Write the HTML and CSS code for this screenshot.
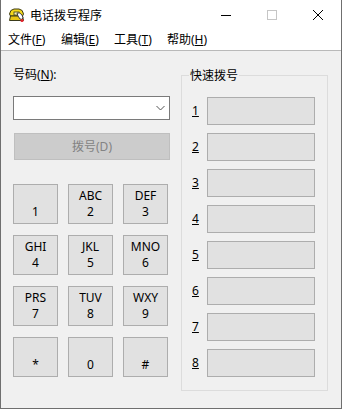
FILE: index.html
```html
<!DOCTYPE html>
<html lang="zh">
<head>
<meta charset="utf-8">
<title>电话拨号程序</title>
<link rel="stylesheet" href="styles.css">
</head>
<body>
<div class="window">
  <div class="titlebar">
    <svg class="app-icon" width="18" height="18" viewBox="0 0 18 18">
      <path d="M1.5 8 Q2 3.5 6 3 L11 3 Q15 3.5 15.5 8 L14.5 10 L2.5 10 Z" fill="#f5d81a" stroke="#3a3a1a" stroke-width="1"/>
      <path d="M2.5 10 L14.5 10 L15.5 14.5 L1.5 14.5 Z" fill="#e8c414" stroke="#3a3a1a" stroke-width="1"/>
      <rect x="6" y="6" width="5" height="3" fill="#fff6b0" stroke="#3a3a1a" stroke-width="0.8"/>
      <path d="M9 7 Q12 6 14 9 L15 12 Q14 14 12 13 L10 10 Z" fill="#ffffff" stroke="#333" stroke-width="0.9"/>
      <circle cx="14" cy="14.5" r="1.6" fill="#e0202a"/>
    </svg>
    <span class="title">电话拨号程序</span>
    <div class="caption-buttons">
      <div class="cbtn"><svg width="10" height="10" viewBox="0 0 10 10"><path d="M0 5.5 H10" stroke="#000" stroke-width="1"/></svg></div>
      <div class="cbtn"><svg width="10" height="10" viewBox="0 0 10 10"><rect x="0.5" y="0.5" width="9" height="9" fill="none" stroke="#c6c6c6" stroke-width="1"/></svg></div>
      <div class="cbtn"><svg width="10" height="10" viewBox="0 0 10 10"><path d="M0 0 L10 10 M10 0 L0 10" stroke="#000" stroke-width="1"/></svg></div>
    </div>
  </div>
  <div class="menubar">
    <span class="menu">文件(<u>F</u>)</span>
    <span class="menu">编辑(<u>E</u>)</span>
    <span class="menu">工具(<u>T</u>)</span>
    <span class="menu">帮助(<u>H</u>)</span>
  </div>
  <div class="client">
    <div class="left">
      <div class="label">号码(<u>N</u>):</div>
      <div class="combo">
        <svg class="chev" width="9" height="6" viewBox="0 0 9 6"><path d="M0.5 1 L4.5 5 L8.5 1" fill="none" stroke="#555" stroke-width="1"/></svg>
      </div>
      <div class="dial">拨号(D)</div>
      <div class="keypad">
        <div class="key"><span>&nbsp;</span><span>1</span></div>
        <div class="key"><span>ABC</span><span>2</span></div>
        <div class="key"><span>DEF</span><span>3</span></div>
        <div class="key"><span>GHI</span><span>4</span></div>
        <div class="key"><span>JKL</span><span>5</span></div>
        <div class="key"><span>MNO</span><span>6</span></div>
        <div class="key"><span>PRS</span><span>7</span></div>
        <div class="key"><span>TUV</span><span>8</span></div>
        <div class="key"><span>WXY</span><span>9</span></div>
        <div class="key"><span>&nbsp;</span><span>*</span></div>
        <div class="key"><span>&nbsp;</span><span>0</span></div>
        <div class="key"><span>&nbsp;</span><span>#</span></div>
      </div>
    </div>
    <fieldset class="speed">
      <legend>快速拨号</legend>
      <div class="srow"><u class="num">1</u><div class="slot"></div></div>
      <div class="srow"><u class="num">2</u><div class="slot"></div></div>
      <div class="srow"><u class="num">3</u><div class="slot"></div></div>
      <div class="srow"><u class="num">4</u><div class="slot"></div></div>
      <div class="srow"><u class="num">5</u><div class="slot"></div></div>
      <div class="srow"><u class="num">6</u><div class="slot"></div></div>
      <div class="srow"><u class="num">7</u><div class="slot"></div></div>
      <div class="srow"><u class="num">8</u><div class="slot"></div></div>
    </fieldset>
  </div>
</div>
</body>
</html>
```

FILE: styles.css
```css
* { box-sizing: border-box; }
html, body { margin: 0; padding: 0; background: #ffffff; }
body {
  font-family: "Noto Sans", "Noto Sans CJK SC", sans-serif;
  font-size: 12px;
  color: #000;
}
.window {
  width: 342px;
  height: 409px;
  border-left: 1px solid #6f6f6f;
  border-right: 1px solid #6f6f6f;
  border-bottom: 1px solid #6f6f6f;
  display: flex;
  flex-direction: column;
  background: #f0f0f0;
}
.titlebar {
  height: 30px;
  background: #fff;
  display: flex;
  align-items: center;
  padding-left: 7px;
}
.app-icon { flex: none; margin-right: 4px; margin-top: -1px; }
.title {
  font-family: "Noto Sans CJK SC", sans-serif;
  font-size: 12px;
  line-height: 16px;
  flex: 1;
}
.caption-buttons { display: flex; height: 30px; }
.cbtn {
  width: 46px;
  height: 30px;
  display: flex;
  align-items: center;
  justify-content: center;
}
.menubar {
  height: 21px;
  background: #fff;
  display: flex;
  align-items: center;
  border-bottom: 1px solid #b9b9b9;
  padding-bottom: 1px;
}
.menu {
  width: 53px;
  padding-left: 7px;
  line-height: 16px;
  font-family: "Noto Sans", "Noto Sans CJK SC", sans-serif;
}
.client {
  flex: 1;
  display: flex;
  align-items: flex-start;
  padding: 16px 0 0 12px;
  gap: 11px;
}
.left {
  width: 157px;
  display: flex;
  flex-direction: column;
}
.label { line-height: 16px; height: 16px; }
.combo {
  margin-top: 13px;
  height: 24px;
  background: #fff;
  border: 1px solid #7a7a7a;
  display: flex;
  align-items: center;
  justify-content: flex-end;
  padding-right: 4px;
}
.dial {
  margin-top: 13px;
  margin-left: 1px;
  height: 27px;
  background: #cccccc;
  border: 1px solid #bfbfbf;
  color: #838383;
  display: flex;
  align-items: center;
  justify-content: center;
  line-height: 16px;
}
.keypad {
  margin-top: 24px;
  display: grid;
  grid-template-columns: 45px 45px 45px;
  grid-auto-rows: 40px;
  column-gap: 10px;
  row-gap: 11px;
}
.key {
  background: #e1e1e1;
  border: 1px solid #adadad;
  display: flex;
  flex-direction: column;
  align-items: center;
  justify-content: center;
  line-height: 16px;
}
.speed {
  margin: 0;
  width: 147px;
  border: 1px solid #dcdcdc;
  padding: 14px 11px 13px 10px;
  display: flex;
  flex-direction: column;
  gap: 8px;
}
.speed legend {
  padding: 0 1px;
  margin-left: -3px;
  line-height: 16px;
  font-family: "Noto Sans CJK SC", sans-serif;
}
.srow {
  display: flex;
  align-items: center;
}
.num {
  width: 15px;
  line-height: 16px;
}
.slot {
  width: 108px;
  height: 28px;
  background: #e1e1e1;
  border: 1px solid #adadad;
}
```
